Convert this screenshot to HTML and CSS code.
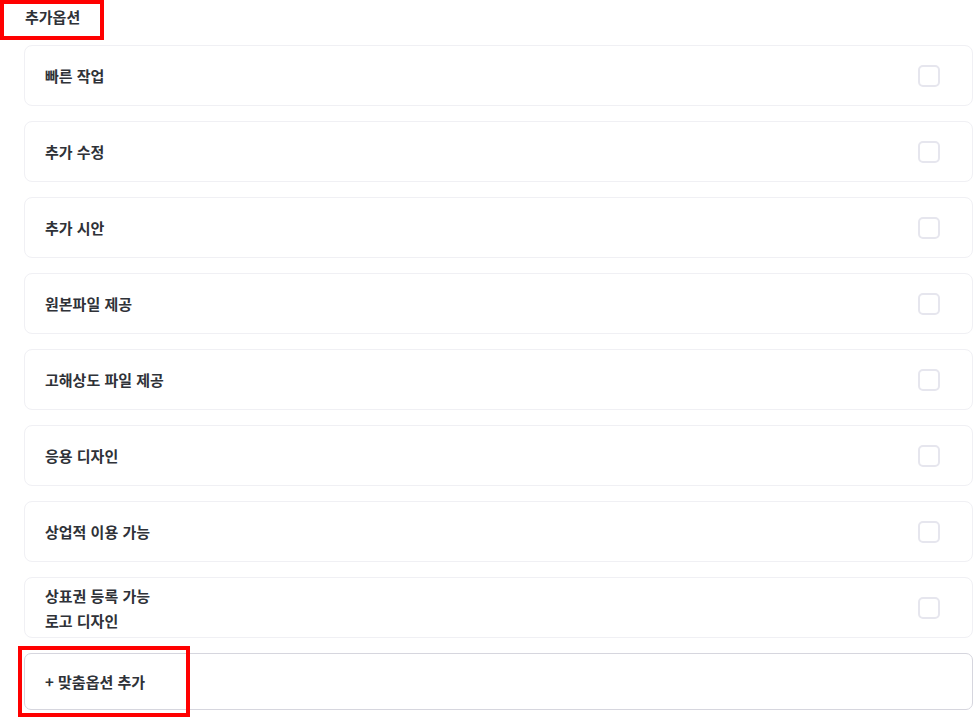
FILE: index.html
```html
<!DOCTYPE html>
<html lang="ko">
<head>
    <meta charset="UTF-8">
    <meta name="viewport" content="width=device-width, initial-scale=1.0">
    <title>추가옵션</title>
    <link rel="stylesheet" href="styles.css">
</head>
<body>
    <div class="options">
        <h2 class="options-title">추가옵션</h2>
        <div class="option-list">
            <label class="option"><span class="option-name">빠른 작업</span><input type="checkbox" class="check"></label>
            <label class="option"><span class="option-name">추가 수정</span><input type="checkbox" class="check"></label>
            <label class="option"><span class="option-name">추가 시안</span><input type="checkbox" class="check"></label>
            <label class="option"><span class="option-name">원본파일 제공</span><input type="checkbox" class="check"></label>
            <label class="option"><span class="option-name">고해상도 파일 제공</span><input type="checkbox" class="check"></label>
            <label class="option"><span class="option-name">응용 디자인</span><input type="checkbox" class="check"></label>
            <label class="option"><span class="option-name">상업적 이용 가능</span><input type="checkbox" class="check"></label>
            <label class="option"><span class="option-name">상표권 등록 가능<br>로고 디자인</span><input type="checkbox" class="check"></label>
        </div>
        <button class="add-option">+ 맞춤옵션 추가</button>
    </div>
    <div class="mark mark-title"></div>
    <div class="mark mark-add"></div>
</body>
</html>
```

FILE: styles.css
```css
body {
    margin: 0;
    background: #fff;
    font-family: "Noto Sans CJK KR", "Noto Sans", sans-serif;
    color: #2f3238;
}
.options {
    padding: 0 7px 0 24px;
}
.options-title {
    margin: 0;
    height: 36px;
    padding-left: 1px;
    font-size: 15px;
    font-weight: 700;
    line-height: 34px;
    color: #2f3238;
}
.option-list {
    display: flex;
    flex-direction: column;
    gap: 15px;
    margin-top: 9px;
}
.option {
    box-sizing: border-box;
    display: flex;
    align-items: center;
    justify-content: space-between;
    height: 61px;
    padding: 0 32px 0 20px;
    border: 1px solid #f0f0f4;
    border-radius: 8px;
}
.option-name {
    font-size: 15px;
    font-weight: 700;
    line-height: 25px;
}
.check {
    appearance: none;
    margin: 0;
    width: 22px;
    height: 22px;
    border: 2px solid #e6e6ee;
    border-radius: 5px;
    background: #fff;
}
.add-option {
    display: block;
    box-sizing: border-box;
    width: 100%;
    height: 57px;
    margin-top: 15px;
    padding: 0 0 0 20px;
    text-align: left;
    font-family: inherit;
    font-size: 15px;
    font-weight: 700;
    color: #2f3238;
    background: #fff;
    border: 1px solid #d6d6de;
    border-radius: 7px;
}
.mark {
    position: absolute;
    box-sizing: border-box;
    border: 4px solid #ff0000;
}
.mark-title {
    left: 0;
    top: 0;
    width: 104px;
    height: 40px;
}
.mark-add {
    left: 18px;
    top: 646px;
    width: 172px;
    height: 71px;
}
```
